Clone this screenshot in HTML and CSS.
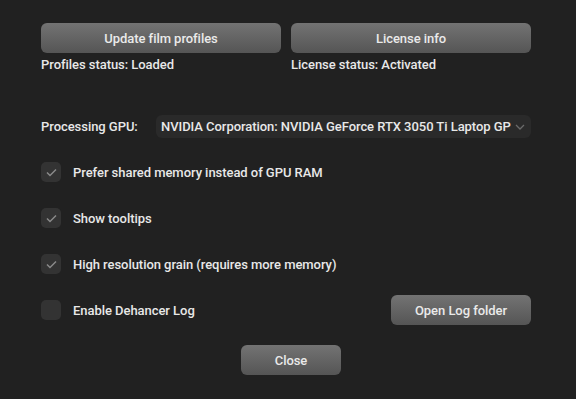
FILE: index.html
```html
<!DOCTYPE html>
<html>
<head>
<meta charset="utf-8">
<link rel="stylesheet" href="styles.css">
</head>
<body>
<div class="dialog">
  <div class="top">
    <div class="col">
      <button class="btn wide">Update film profiles</button>
      <div class="status">Profiles status: Loaded</div>
    </div>
    <div class="col">
      <button class="btn wide">License info</button>
      <div class="status">License status: Activated</div>
    </div>
  </div>
  <div class="gpu-row">
    <span class="label">Processing GPU:</span>
    <div class="select">
      <span class="select-text">NVIDIA Corporation: NVIDIA GeForce RTX 3050 Ti Laptop GP</span>
      <svg class="chev" width="10" height="6" viewBox="0 0 10 6"><path d="M1 1 L5 5 L9 1" fill="none" stroke="#6a6a6a" stroke-width="1.3"/></svg>
    </div>
  </div>
  <div class="check-row">
    <span class="box"><svg width="11" height="9" viewBox="0 0 11 9"><path d="M1 4.5 L4 7.5 L10 1.5" fill="none" stroke="#8a8a8a" stroke-width="1.5"/></svg></span>
    <span class="label">Prefer shared memory instead of GPU RAM</span>
  </div>
  <div class="check-row">
    <span class="box"><svg width="11" height="9" viewBox="0 0 11 9"><path d="M1 4.5 L4 7.5 L10 1.5" fill="none" stroke="#8a8a8a" stroke-width="1.5"/></svg></span>
    <span class="label">Show tooltips</span>
  </div>
  <div class="check-row">
    <span class="box"><svg width="11" height="9" viewBox="0 0 11 9"><path d="M1 4.5 L4 7.5 L10 1.5" fill="none" stroke="#8a8a8a" stroke-width="1.5"/></svg></span>
    <span class="label">High resolution grain (requires more memory)</span>
  </div>
  <div class="check-row log-row">
    <span class="box"></span>
    <span class="label grow">Enable Dehancer Log</span>
    <button class="btn log">Open Log folder</button>
  </div>
  <div class="bottom">
    <button class="btn close">Close</button>
  </div>
</div>
</body>
</html>
```
FILE: styles.css
```css
html, body {
  margin: 0;
  padding: 0;
  background: #212121;
}
body {
  font-family: Roboto, "Liberation Sans", sans-serif;
  font-weight: 500;
  font-size: 13px;
  letter-spacing: -0.05px;
  color: #e8e8e8;
}
.dialog {
  width: 490px;
  padding: 23px 45px 0 41px;
}
.top {
  display: grid;
  grid-template-columns: 240px 240px;
  column-gap: 10px;
}
.btn {
  font-family: inherit;
  font-weight: 500;
  font-size: 13px;
  letter-spacing: -0.05px;
  color: #eaeaea;
  border: none;
  border-radius: 6px;
  background: linear-gradient(#737373, #555555);
  height: 30px;
  padding: 0;
  display: flex;
  align-items: center;
  justify-content: center;
}
.wide { width: 240px; }
.status {
  margin-top: 5px;
  line-height: 14px;
}
.gpu-row {
  display: flex;
  align-items: center;
  margin-top: 43px;
  height: 23px;
}
.gpu-row .label {
  width: 115px;
}
.select {
  width: 375px;
  height: 23px;
  background: #2a2a2a;
  border-radius: 6px;
  display: flex;
  align-items: center;
  padding-left: 5px;
  box-sizing: border-box;
}
.select-text {
  flex: 1;
  white-space: nowrap;
  overflow: hidden;
}
.chev {
  margin: 0 6px 0 4px;
}
.check-row {
  display: flex;
  align-items: center;
  height: 20px;
  margin-top: 24px;
}
.check-row + .check-row {
  margin-top: 26px;
}
.gpu-row + .check-row {
  margin-top: 24px;
}
.box {
  width: 20px;
  height: 20px;
  border-radius: 5px;
  background: #333333;
  display: flex;
  align-items: center;
  justify-content: center;
  margin-right: 12px;
}
.grow { flex: 1; }
.log {
  width: 140px;
}
.bottom {
  display: flex;
  justify-content: center;
  margin-top: 25px;
  padding-left: 10px;
}
.close {
  width: 100px;
}
```
